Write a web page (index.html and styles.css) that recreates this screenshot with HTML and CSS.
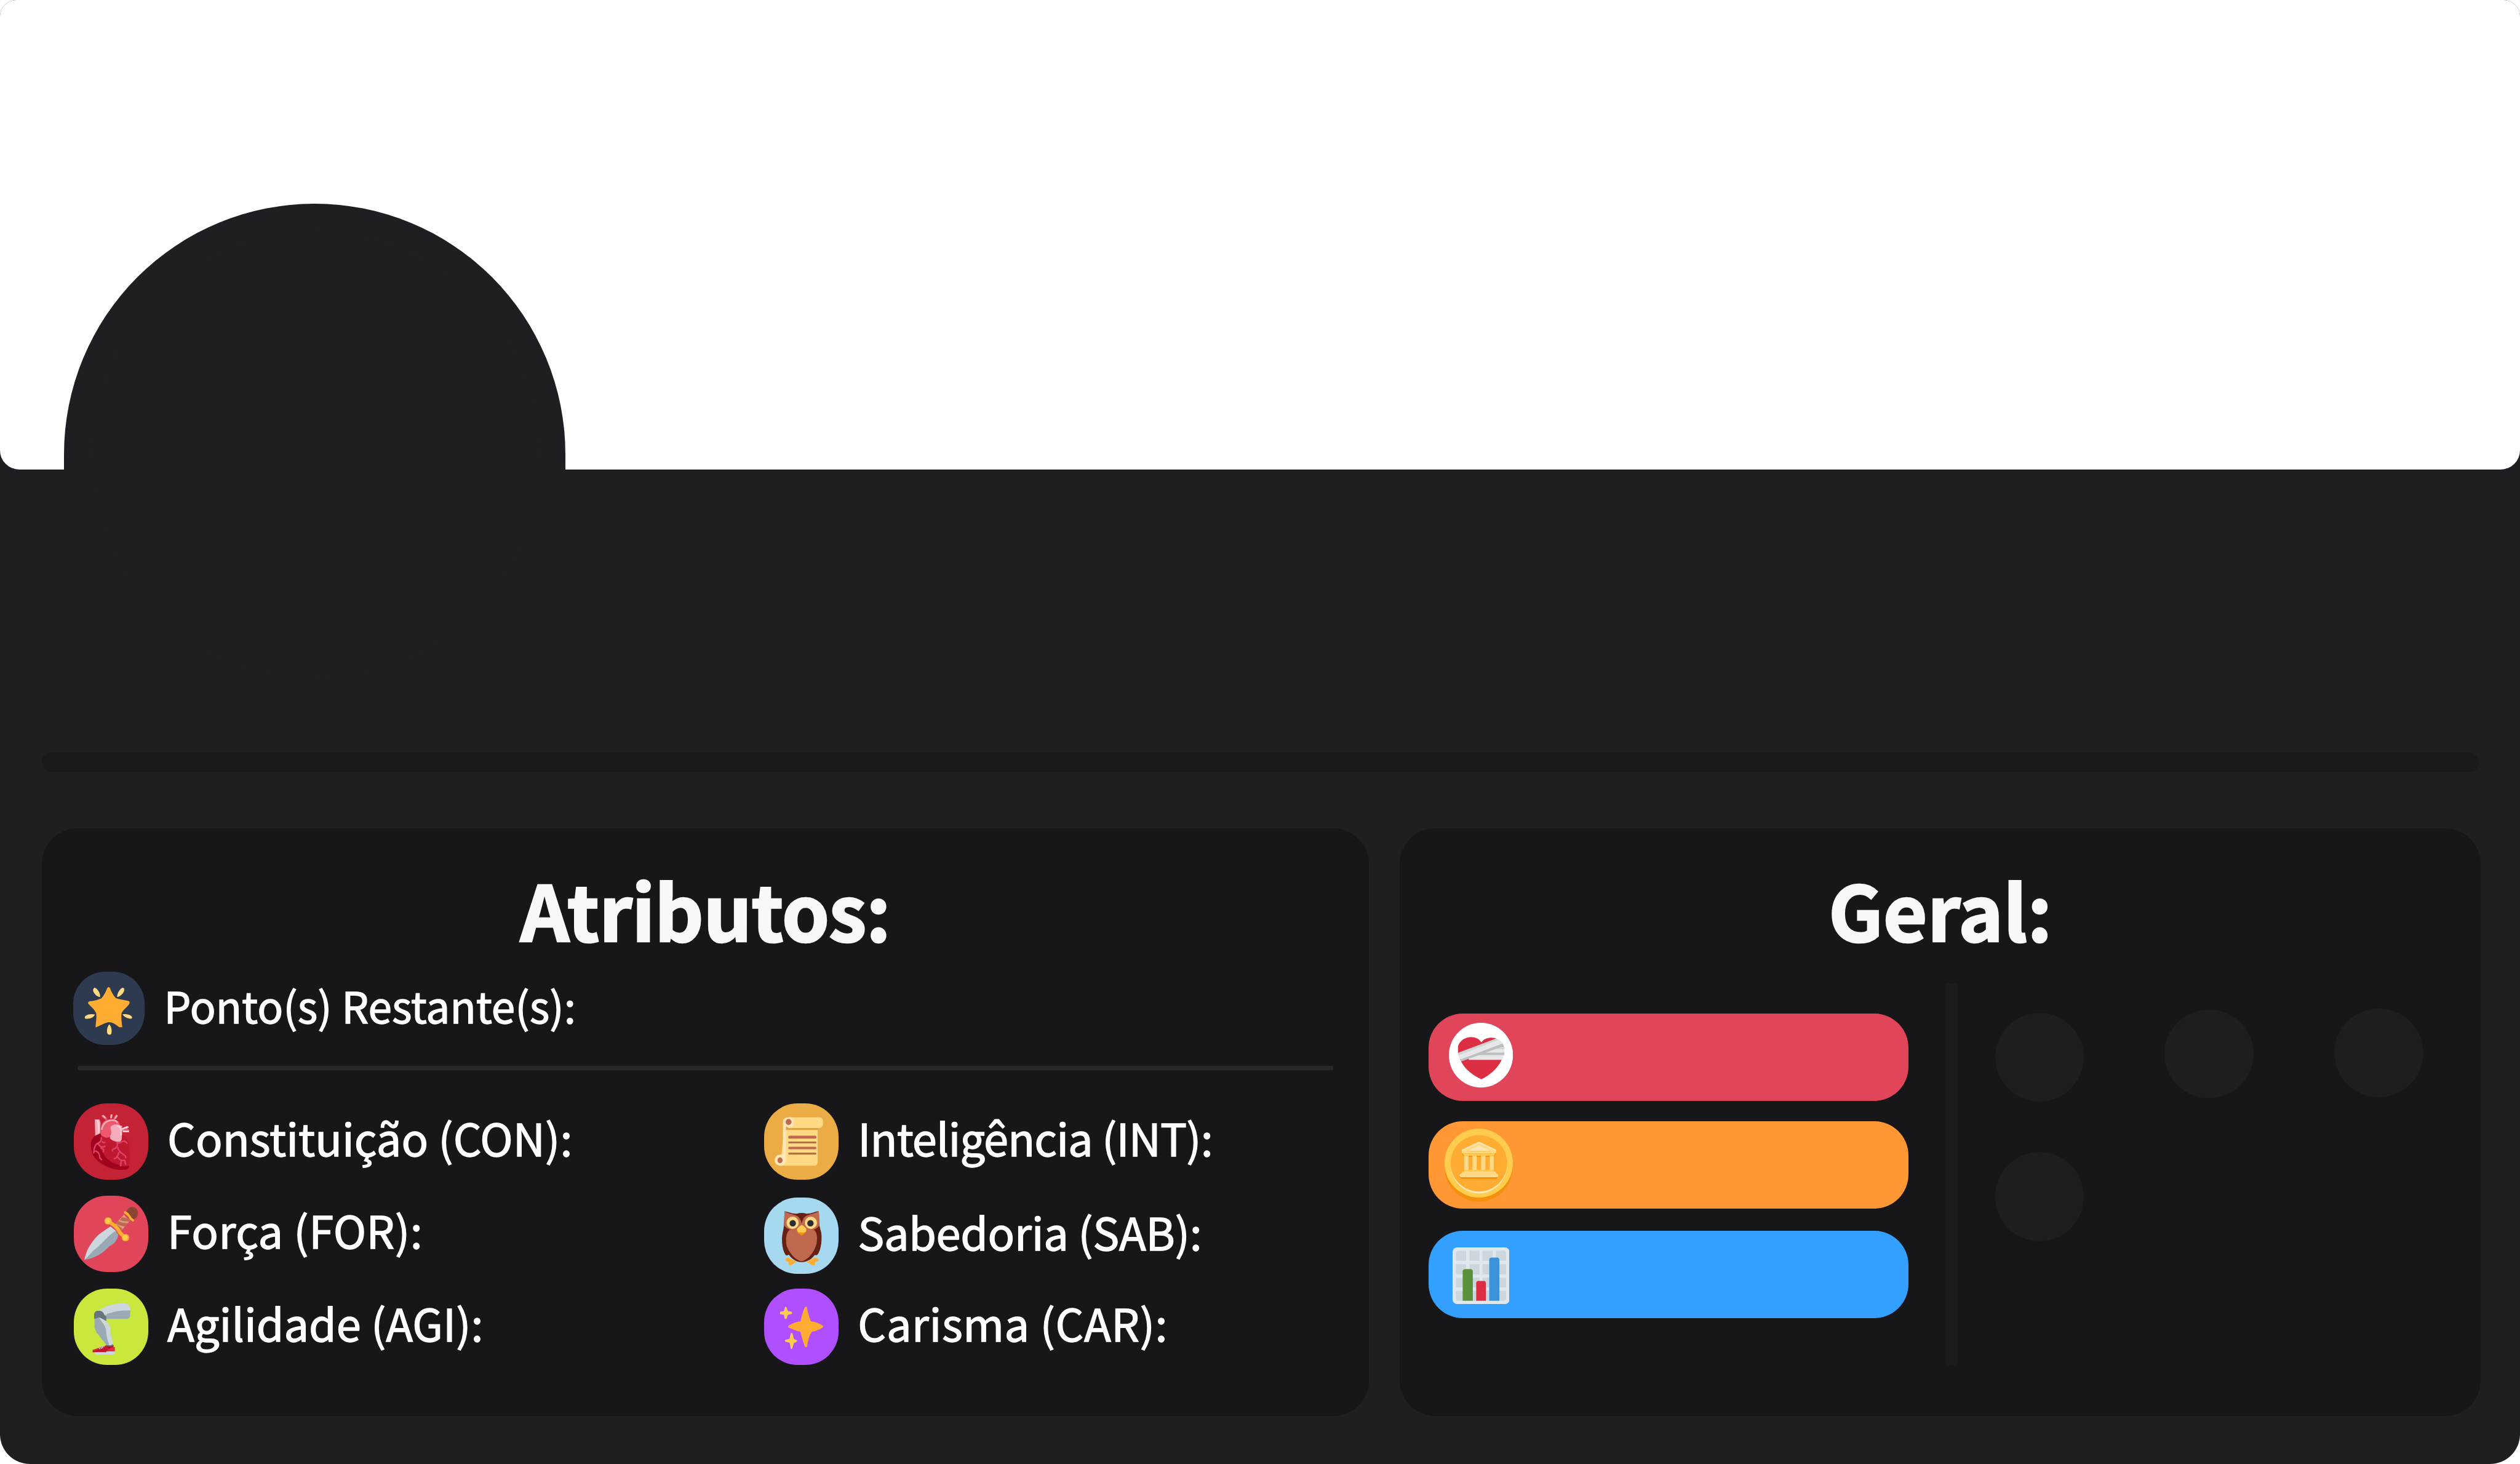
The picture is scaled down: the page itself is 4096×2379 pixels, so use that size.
FILE: index.html
```html
<!DOCTYPE html>
<html lang="pt-BR">
<head>
<meta charset="utf-8">
<title>Perfil</title>
<link rel="stylesheet" href="styles.css">
</head>
<body>
<main class="profile">
  <header class="banner"><div class="avatar-cutout"></div><div class="avatar-ring"></div></header>
  <div class="separator"></div>
  <div class="panels">
    <section class="panel attributes">
      <h2 class="title">Atributos:</h2>
      <div class="points">
        <span class="chip chip-points">
          <svg viewBox="66 66 444 456" preserveAspectRatio="none">
            <path fill="#ffac33" d="M277 168Q286 156 295 168C303 190 312 208 330 230C350 238 380 243 405 247Q420 250 416 264C404 284 380 300 367 322C362 350 368 380 371 411H352C330 395 312 380 288 380C262 382 236 402 207 412Q203 408 206 395C208 372 212 350 209 325C198 300 178 284 159 265Q156 252 170 250C195 247 220 241 240 232C258 214 268 190 277 168Z"/>
            <g fill="#ffd983">
              <path d="M201 165C190 167 187 180 192 191C200 208 215 221 233 224C236 203 222 176 201 165Z"/>
              <path d="M372 165C355 173 338 200 339 224C358 221 378 203 383 184C385 172 381 165 372 165Z"/>
              <path d="M201 332C180 327 152 331 140 343C134 353 141 360 152 359C174 358 194 350 201 332Z"/>
              <path d="M373 331C394 328 422 333 431 346C435 356 427 360 416 358C396 353 380 346 373 331Z"/>
              <path d="M290 393C278 407 273 430 278 450Q290 466 303 452C308 430 303 406 290 393Z"/>
            </g>
          </svg>
        </span>
        <span class="label">Ponto(s) Restante(s):</span>
      </div>
      <div class="rule"></div>
      <div class="stats">
        <ul class="stat-column">
          <li class="stat">
            <span class="chip chip-con">
              <svg viewBox="69 45 462 474" preserveAspectRatio="none">
                <path fill="#be1931" d="M236 231C205 235 176 262 175 304C180 370 210 410 262 435C310 455 360 462 411 449C420 400 418 320 408 280C396 256 382 242 360 236Z"/>
                <path fill="#a0041e" d="M237 231C200 235 172 270 175 310C180 355 190 382 225 407C280 448 345 466 395 455Q412 450 413 435H370C330 422 296 412 266 380C250 348 228 330 228 300C232 280 240 262 237 231Z"/>
                <path fill="#f4abba" d="M199 144H228L235 165L232 232L202 246Z"/>
                <path fill="none" stroke="#fbd3dc" stroke-width="9" d="M212 150Q222 155 221 175L225 228"/>
                <path fill="#ea596e" d="M237 240C228 200 240 155 280 146C325 135 358 158 357 190L300 250Q268 270 237 240Z"/>
                <path fill="none" stroke="#f4abba" stroke-width="10" d="M243 209C246 176 270 151 305 149Q332 148 341 166"/>
                <path fill="none" stroke="#ea596e" stroke-width="13" stroke-linecap="round" d="M248 124L270 142M301 120V134M334 122L322 138"/>
                <path fill="none" stroke="#f4abba" stroke-width="11" stroke-linecap="round" d="M252 123L264 133M304 118L301 132M336 123L327 136"/>
                <path fill="#f4abba" d="M297 192C310 174 338 171 363 184H369V235C366 258 373 272 355 284C330 286 304 276 294 262V248C306 232 302 217 297 205Z"/>
                <path fill="none" stroke="#f4abba" stroke-width="12" d="M368 208L409 191M372 218H413"/>
                <path fill="#ea596e" d="M380 204L400 202L411 205V210H376Z"/>
                <path fill="none" stroke="#fbd3dc" stroke-width="9" d="M337 184Q361 190 363 210V244M369 204L402 190M376 218H413"/>
                <path fill="none" stroke="#dd4367" stroke-width="9" stroke-linejoin="round" d="M240 256C242 272 235 285 220 292C202 298 194 320 193 356M194 340C220 342 229 355 231 384L243 398M243 280L250 288L266 288M222 294C224 314 240 315 252 316L266 310M235 318L254 332V349M338 286C342 310 342 322 309 331V344M338 290Q356 294 366 283L384 279L403 294M342 318Q348 345 370 357L391 373V386M350 348Q344 372 330 385L317 390M340 378L364 402L359 436M359 400H386L392 428"/>
              </svg>
            </span>
            <span class="label">Constituição (CON):</span>
          </li>
          <li class="stat stat-for">
            <span class="chip chip-for">
              <svg viewBox="69 48 462 474" preserveAspectRatio="none">
                <path fill="#d99e82" d="M380 166L416 205L364 267L326 226Z"/>
                <path fill="#c1694f" d="M369 182C384 185 402 188 421 193L416 210C396 206 375 208 356 200ZM345 206C362 215 382 217 404 220L390 240C370 237 350 232 331 222ZM334 226L372 253L366 266L345 247Z"/>
                <ellipse cx="432" cy="157" rx="36" ry="39" fill="#8a4633"/>
                <path fill="none" stroke="#ffac33" stroke-width="15" stroke-linecap="round" d="M387 152Q402 158 412 174Q422 193 436 201"/>
                <path fill="#ccd6dd" d="M297 239L333 269L147 441L134 447C145 400 158 372 180 342C205 300 240 275 297 239Z"/>
                <path fill="#9aaab4" d="M327 267L346 291C340 325 318 350 290 362C252 405 200 437 134 447C165 420 180 395 205 377C250 340 275 303 327 267Z"/>
                <path fill="none" stroke="#ffac33" stroke-width="22" d="M284 207C307 225 338 237 350 269C360 287 376 298 390 308"/>
                <circle cx="282" cy="205" r="23" fill="#ffac33"/><circle cx="390" cy="309" r="23" fill="#ffac33"/>
                <circle cx="280" cy="205" r="15" fill="#ffcc4d"/><circle cx="387" cy="307" r="16" fill="#ffcc4d"/>
              </svg>
            </span>
            <span class="label">Força (FOR):</span>
          </li>
          <li class="stat stat-agi">
            <span class="chip chip-agi">
              <svg viewBox="66 57 462 474" preserveAspectRatio="none">
                <path fill="#9aaab4" d="M255 218L330 192H417V221Q416 242 398 245H267Z"/>
                <path fill="#ccd6dd" d="M220 195C255 166 320 145 380 148Q412 150 417 180V192C370 194 330 194 300 207Q272 210 264 224Z"/>
                <path fill="#67757f" d="M192 240V215Q197 195 217 195C240 195 250 202 255 220L268 230V258L230 245H195Z"/>
                <path fill="#9aaab4" d="M195 246L220 236L270 305L286 410H268Q255 385 236 368Q220 340 208 332C205 315 196 312 195 298Z"/>
                <path fill="#ccd6dd" d="M220 237Q240 240 262 257C286 275 295 292 294 325C297 360 308 380 310 402L302 410H286C277 370 268 365 267 310C258 285 242 260 220 237Z"/>
                <path fill="#be1931" d="M183 438C220 430 240 412 268 411H315L305 440L268 453H183Z"/>
                <path fill="#dd2e44" d="M183 438Q207 429 229 431L190 446ZM321 420V448H267Q280 430 315 419Z"/>
                <path fill="#a0041e" d="M268 412H315L283 426Z"/>
                <path fill="#67757f" d="M267 407L292 411L310 402V413L292 418L267 414Z"/>
                <path fill="#ccd6dd" d="M195 453H268V447H321V459Q320 467 310 467H207Q196 465 195 453Z"/>
                <path fill="none" stroke="#f5f8fa" stroke-width="5" d="M222 425L230 432M231 418L240 430M241 414L247 426M247 415H258"/>
              </svg>
            </span>
            <span class="label">Agilidade (AGI):</span>
          </li>
        </ul>
        <ul class="stat-column">
          <li class="stat stat-int">
            <span class="chip chip-int">
              <svg viewBox="72 45 462 474" preserveAspectRatio="none">
                <path fill="#ffd983" d="M200 180H405V412Q403 431 386 432H172Z"/>
                <path fill="#e39f3d" d="M207 186H405V210H207Z"/>
                <path fill="#ffd983" d="M222 132H418Q438 134 438 154V177Q434 198 412 198H222Z"/>
                <path fill="#ffe8b6" d="M222 132H243Q255 137 255 150V178Q248 192 225 197L207 188V402Q204 428 180 432H168Q138 426 138 399Q140 365 170 363H189V155Q192 133 222 132Z"/>
                <g fill="#c1694f">
                  <ellipse cx="224" cy="161" rx="18" ry="19"/><ellipse cx="171" cy="399" rx="16" ry="18"/>
                  <rect x="222" y="246" width="175" height="18" rx="8"/><rect x="222" y="282" width="175" height="12" rx="5"/><rect x="222" y="315" width="175" height="15" rx="7"/><rect x="222" y="351" width="175" height="12" rx="5"/>
                </g>
              </svg>
            </span>
            <span class="label">Inteligência (INT):</span>
          </li>
          <li class="stat stat-sab">
            <span class="chip chip-sab">
              <svg viewBox="72 63 462 474" preserveAspectRatio="none">
                <path fill="#ffac33" d="M222 437L274 462L245 480Q234 490 226 483L222 463Q202 460 204 447Q207 437 222 437ZM386 437L336 462L363 480Q375 490 388 482L390 463Q411 462 411 447Q405 437 386 437Z"/>
                <path fill="#662113" d="M200 148C225 152 245 165 275 163Q304 155 335 163C365 165 385 150 411 148L416 240C421 260 430 280 429 310C430 365 415 410 400 421H386C365 450 335 465 305 465C270 465 240 440 226 419L210 424C192 405 184 370 183 325C182 295 192 270 195 240Z"/>
                <path fill="#c1694f" d="M226 268C206 290 206 330 212 362C225 400 258 448 304 460C350 448 384 400 398 350C404 310 402 285 385 266L330 245H280Z"/>
                <path fill="#c1694f" d="M202 147C215 162 245 163 272 175C292 183 302 205 305 226C310 203 318 185 338 175C368 163 395 160 412 147C416 175 417 205 413 240Q396 262 365 266L330 250H280L246 266Q212 260 197 237C194 200 197 170 202 147Z"/>
                <circle cx="249" cy="220" r="38" fill="#ffd983"/><circle cx="363" cy="220" r="38" fill="#ffd983"/>
                <circle cx="250" cy="223" r="20" fill="#292f33"/><circle cx="360" cy="223" r="20" fill="#292f33"/>
                <path fill="#f4900c" d="M276 270H335Q330 287 305 299Q280 288 276 270Z"/>
                <path fill="#ffcc4d" d="M305 233Q325 242 335 260Q336 277 320 280H292Q275 275 276 260Q286 243 305 233Z"/>
              </svg>
            </span>
            <span class="label">Sabedoria (SAB):</span>
          </li>
          <li class="stat stat-car">
            <span class="chip chip-car">
              <svg viewBox="72 57 462 474" preserveAspectRatio="none">
                <path fill="#ffac33" d="M326 171H338C343 205 352 235 363 261C390 262 415 275 438 288V298C415 312 394 322 370 325C350 350 345 385 338 420H326C315 390 305 355 298 325C272 320 245 308 222 298V288C248 274 272 262 298 261C305 232 313 198 326 171Z"/>
                <path fill="#ffcc4d" d="M202 171H210L220 197L243 200Q248 208 243 215L220 220L211 245H201L195 220L172 216Q169 208 173 200L195 197ZM238 333H248L257 370L278 379L275 387L257 396L246 432H238L231 394L202 386V375L230 370Z"/>
              </svg>
            </span>
            <span class="label">Carisma (CAR):</span>
          </li>
        </ul>
      </div>
    </section>
    <section class="panel general">
      <h2 class="title title-general">Geral:</h2>
      <div class="general-body">
        <div class="pills">
          <div class="pill pill-life">
            <svg class="icon-life" viewBox="186 91 399 314" preserveAspectRatio="none">
              <ellipse cx="385.500" cy="248" rx="199.500" ry="157" fill="#fff"/>
              <path fill="#dd2e44" d="M243 237V205C262 155 355 145 388 186C408 163 445 160 478 166L530 210C533 285 455 340 388 365C330 343 285 315 262 278Z"/>
              <path fill="#e6e7e8" d="M300 232L515 202L531 218Q530 246 515 271H310Z"/>
              <path fill="#bcbec0" d="M360 236H531V248H330Z"/>
              <path fill="#d1d3d4" d="M405 229L470 207H531V218H440Z"/>
              <path fill="#e6e7e8" d="M243 237L480 168Q515 178 525 196L262 270L246 258Z"/>
              <path fill="#d1d3d4" d="M243 237L474 169L495 174L246 249Z"/>
              <path fill="#bcbec0" d="M258 269L520 192L528 204L262 279Z"/>
            </svg>
          </div>
          <div class="pill pill-coins">
            <svg class="icon-coins" viewBox="160 603 425 354" preserveAspectRatio="none">
              <ellipse cx="372.500" cy="790" rx="212.500" ry="167" fill="#f4900c"/>
              <ellipse cx="372.500" cy="770" rx="212.500" ry="167" fill="#ffcc4d"/>
              <ellipse cx="373.500" cy="776" rx="176" ry="141" fill="#ffe8b6"/>
              <ellipse cx="373.500" cy="771" rx="176" ry="137" fill="#ffac33"/>
              <path fill="#ffe8b6" d="M267 705L374 666L480 705V712H267Z"/>
              <path fill="#ffd983" fill-rule="evenodd" d="M267 711L374 674L480 711V723H267ZM298 714H450L374 686Z"/>
              <path fill="#f4900c" d="M267 723H480L466 741H282ZM252 832H495L485 847H262Z"/>
              <path fill="#ffac33" d="M309 741H333V803H309ZM360 741H387V803H360ZM414 741H441V803H414Z"/>
              <path fill="#ffcc4d" d="M272 723H475L465 735H282ZM282 803H466V812H282Z"/>
              <path fill="#ffd983" d="M282 735H309V803H282ZM333 735H360V803H333ZM387 735H414V803H387ZM441 735H466V803H441ZM272 811H475Q480 822 490 824Q500 832 488 839H260Q247 832 256 824Q268 822 272 811Z"/>
            </svg>
          </div>
          <div class="pill pill-level">
            <svg class="icon-level" viewBox="210 1180 354 275" preserveAspectRatio="none">
              <rect x="210" y="1180" width="354" height="275" rx="30" ry="22" fill="#e1e8ed"/>
              <path fill="#ccd6dd" d="M231 1210Q233 1198 246 1196H294V1245H231ZM315 1196H378V1245H315ZM396 1196H459V1245H396ZM480 1196H528Q541 1198 543 1210V1245H480ZM231 1261H294V1311H231ZM315 1261H378V1311H315ZM396 1261H459V1311H396ZM480 1261H543V1311H480ZM231 1327H294V1374H231ZM315 1327H378V1374H315ZM396 1327H459V1374H396ZM480 1327H543V1374H480ZM231 1390H294V1439H246Q233 1437 231 1428ZM315 1390H378V1439H315ZM396 1390H459V1439H396ZM480 1390H543V1428Q541 1437 528 1439H480Z"/>
              <path fill="#5c913b" d="M273 1439V1296Q275 1285 288 1285H321Q335 1286 336 1296V1439Z"/>
              <path fill="#dd2e44" d="M357 1439V1353Q359 1343 370 1343H405Q416 1344 417 1353V1439Z"/>
              <path fill="#3b94d9" d="M438 1439V1240Q440 1229 453 1229H487Q500 1230 501 1240V1439Z"/>
            </svg>
          </div>
        </div>
        <div class="vertical-rule"></div>
        <div class="badges">
          <span class="badge"></span>
          <span class="badge badge-second"></span>
          <span class="badge badge-third"></span>
          <span class="badge"></span>
        </div>
      </div>
    </section>
  </div>
</main>
</body>
</html>
```
FILE: styles.css
```css
/* 1rem equals 100 design units on the 5223-unit wide card */
html {
  font-size: calc(100vw / 52.23);
  background: #fff;
}

body {
  margin: 0;
  overflow: hidden;
  font-family: "Noto Sans CJK JP", "Noto Sans", sans-serif;
  color: #fff;
}

.profile {
  height: 100vh;
  box-sizing: border-box;
  background: #1e1f23;
  border-radius: 0.05rem 0.05rem 0.62rem 0.62rem;
  border-radius: 0.34rem 0.34rem 0.62rem 0.62rem;
  overflow: hidden;
}

.banner {
  position: relative;
  height: 9.735rem;
  background: #fff;
  border-radius: 0 0 0.4rem 0.4rem;
}

.avatar-cutout {
  position: absolute;
  left: 1.32rem;
  top: 4.22rem;
  width: 10.4rem;
  height: 5.53rem;
  background: #1e1f23;
  border-radius: 5.2rem 5.2rem 0 0;
}

.avatar-ring {
  position: absolute;
  left: 1.9rem;
  top: 4.78rem;
  width: 9.28rem;
  height: 9.28rem;
  box-sizing: border-box;
  border: 1px solid rgba(255, 255, 255, 0.012);
  border-radius: 50%;
}

.separator {
  height: 0.41rem;
  margin: 5.86rem 0.86rem 0 0.87rem;
  background: #1a1a1c;
  border-radius: 0.2rem;
}

.panels {
  display: grid;
  grid-template-columns: 27.5rem 22.4rem;
  column-gap: 0.645rem;
  margin: 1.165rem 0 0 0.87rem;
}

.panel {
  height: 12.17rem;
  background: #171719;
  border-radius: 0.74rem;
}

.title {
  margin: 0;
  padding-top: 0.36rem;
  font-size: 1.58rem;
  font-weight: 700;
  line-height: 2.6rem;
  letter-spacing: -0.008rem;
  text-align: center;
  color: #f8f8f8;
  -webkit-text-stroke: 0.035rem #f8f8f8;
}

.title-general {
  letter-spacing: 0;
}

.points,
.stat {
  display: flex;
  align-items: flex-start;
}

.points {
  margin-left: 0.65rem;
}

.chip {
  flex: none;
  width: 1.54rem;
  height: 1.58rem;
  border-radius: 0.69rem;
  overflow: hidden;
}

.chip svg {
  display: block;
  width: 100%;
  height: 100%;
}

.chip-points {
  width: 1.48rem;
  height: 1.52rem;
  border-radius: 0.66rem;
  background: #2e3a50;
}

.chip-con { background: #c42336; }
.chip-for { background: #e14559; }
.chip-agi { background: #c9e73c; }
.chip-int { background: #ebab45; }
.chip-sab { background: #a6d9f0; }
.chip-car { background: #b04fff; }

.label {
  margin-left: 0.4rem;
  font-size: 0.92rem;
  line-height: 1.41rem;
  white-space: nowrap;
  -webkit-text-stroke: 0.017rem #fff;
}

.points .label {
  font-size: 0.885rem;
  line-height: 1.37rem;
}

.rule {
  height: 0.1rem;
  margin: 0.43rem 0.74rem 0;
  background: #27282b;
  border-radius: 0.03rem;
}

.stats {
  display: grid;
  grid-template-columns: 14.31rem auto;
  align-items: start;
  margin: 0.68rem 0 0 0.66rem;
}

.stat-column {
  display: flex;
  flex-direction: column;
  gap: 0.34rem;
  margin: 0;
  padding: 0;
  list-style: none;
}

.stat-sab {
  margin: 0.04rem 0 -0.04rem;
}

.stat-for .label { letter-spacing: 0.006rem; }
.stat-int .label { letter-spacing: -0.0115rem; }
.stat-sab .label { letter-spacing: -0.004rem; }
.stat-car .label { letter-spacing: 0.007rem; }

.general-body {
  display: flex;
  padding: 0.25rem 0 0 0.59rem;
}

.pills {
  width: 9.955rem;
  padding-top: 0.62rem;
}

.pill {
  display: flex;
  align-items: flex-start;
  height: 1.81rem;
  border-radius: 0.71rem;
}

.pill-life { background: #e14559; }
.pill-coins { margin-top: 0.42rem; background: #ff9734; }
.pill-level { margin-top: 0.47rem; background: #33a0ff; }

.icon-life {
  width: 1.33rem;
  height: 1.342rem;
  margin: 0.2rem 0 0 0.42rem;
}

.icon-coins {
  width: 1.417rem;
  height: 1.513rem;
  margin: 0.158rem 0 0 0.333rem;
}

.icon-level {
  width: 1.18rem;
  height: 1.175rem;
  margin: 0.342rem 0 0 0.5rem;
}

.vertical-rule {
  width: 0.225rem;
  height: 7.91rem;
  margin-left: 0.775rem;
  background: #1c1c20;
}

.badges {
  display: grid;
  grid-template-columns: repeat(3, 1.845rem);
  grid-auto-rows: 1.84rem;
  column-gap: 1.67rem;
  row-gap: 1.05rem;
  padding: 0.605rem 0 0 0.79rem;
}

.badge {
  background: #1e1e22;
  border-radius: 50%;
}

.badge-second { transform: translateY(-0.07rem); }
.badge-third { transform: translateY(-0.09rem); }
```
